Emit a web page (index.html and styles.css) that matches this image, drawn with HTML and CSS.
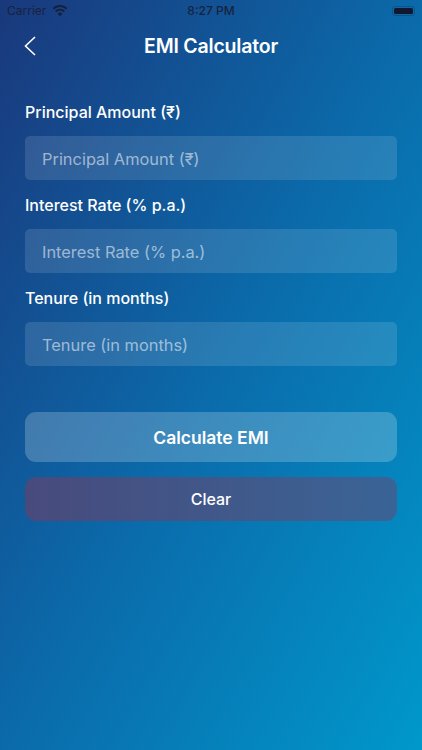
FILE: index.html
```html
<!DOCTYPE html>
<html lang="en">
<head>
<meta charset="utf-8">
<title>EMI Calculator</title>
<link rel="stylesheet" href="styles.css">
</head>
<body>
<div class="screen">
  <div class="status">
    <div class="status-left">
      <span>Carrier</span>
      <svg class="wifi" width="16" height="12" viewBox="0 0 16 12"><path d="M8 0C5.100 0 2.500 1.100.6 3l1.400 1.500C3.500 3 5.600 2.100 8 2.100s4.500.9 6 2.400L15.400 3C13.500 1.100 10.900 0 8 0z" fill="#14203c"/><path d="M8 3.700c-1.900 0-3.700.8-5 2l1.400 1.500c.9-.9 2.200-1.400 3.600-1.400s2.700.5 3.600 1.400L13 5.700c-1.300-1.200-3.100-2-5-2z" fill="#14203c"/><path d="M8 7.400c-1 0-1.900.4-2.500 1L8 11.200l2.500-2.800c-.6-.6-1.500-1-2.500-1z" fill="#14203c"/></svg>
    </div>
    <span class="clock">8:27 PM</span>
    <div class="battery"><span class="battery-fill"></span></div>
  </div>
  <header class="nav">
    <svg class="back" width="14" height="22" viewBox="0 0 14 22"><path d="M12 2 2.500 11 12 20" fill="none" stroke="#fff" stroke-width="1.600"/></svg>
    <h1>EMI Calculator</h1>
  </header>
  <form class="form">
    <label class="field">
      <span class="label">Principal Amount (₹)</span>
      <input class="input" placeholder="Principal Amount (₹)">
    </label>
    <label class="field">
      <span class="label">Interest Rate (% p.a.)</span>
      <input class="input" placeholder="Interest Rate (% p.a.)">
    </label>
    <label class="field">
      <span class="label">Tenure (in months)</span>
      <input class="input" placeholder="Tenure (in months)">
    </label>
    <button type="button" class="btn btn-primary">Calculate EMI</button>
    <button type="button" class="btn btn-clear">Clear</button>
  </form>
</div>
</body>
</html>
```
FILE: styles.css
```css
* { box-sizing: border-box; }
html, body { margin: 0; height: 100%; }
body { font-family: Inter, "Noto Sans", sans-serif; color: #fff; overflow: hidden; }
.screen {
  width: 422px; height: 750px;
  background: linear-gradient(to bottom right, #1a387c 0%, #0b6aaa 50%, #0098cb 100%);
  display: flex; flex-direction: column;
}
.status {
  height: 20px; padding: 1px 7px 0 7px;
  display: flex; align-items: center; justify-content: space-between;
  position: relative; color: #17233f; font-size: 12px; line-height: 20px;
}
.status-left { display: flex; align-items: center; gap: 6px; }
.clock { position: absolute; left: 0; right: 0; text-align: center; font-weight: 500; }
.battery {
  width: 23px; height: 10px; border: 1px solid rgba(23,35,63,.3); border-radius: 3px; padding: 1px;
}
.battery-fill { display: block; height: 100%; background: #10182f; border-radius: 1.500px; }
.nav { height: 52px; display: flex; align-items: center; justify-content: center; position: relative; }
.back { position: absolute; left: 23px; top: 15px; }
.nav h1 { margin: 0; font-size: 19.500px; font-weight: 600; line-height: 52px; letter-spacing: -.2px; }
.form { padding: 27px 25px 0; display: flex; flex-direction: column; }
.field { display: flex; flex-direction: column; height: 93px; }
.label { font-size: 16px; font-weight: 500; line-height: 26px; height: 37px; }
.input {
  width: 372px; height: 44px; padding: 2px 17px 0; border: 0; border-radius: 5px;
  background: rgba(255,255,255,.12); color: #fff; outline: 0;
  font: 400 16.400px Inter, "Noto Sans", sans-serif;
}
.input::placeholder { color: rgba(255,255,255,.55); opacity: 1; }
.btn { width: 372px; border: 0; color: #fff; font-family: inherit; display: block; padding: 0; }
.btn-primary {
  height: 50px; margin-top: 34px; border-radius: 11px;
  background: rgba(255,255,255,.21); font-size: 17.500px; font-weight: 600;
}
.btn-clear {
  height: 44px; margin-top: 15px; border-radius: 11px;
  background: linear-gradient(90deg, #484a7c, #3a6496); font-size: 16px; font-weight: 500;
}
```
